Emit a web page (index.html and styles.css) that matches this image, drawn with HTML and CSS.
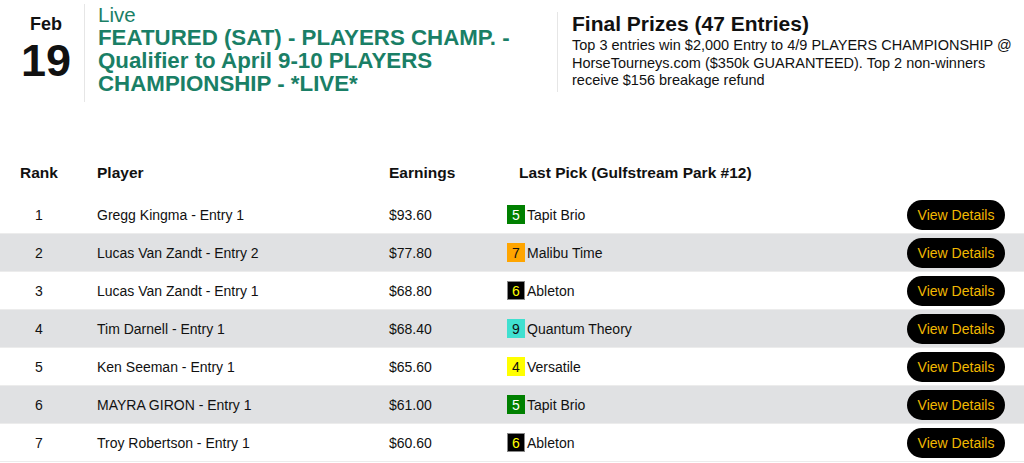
FILE: index.html
```html
<!DOCTYPE html>
<html>
<head>
<meta charset="utf-8">
<link rel="stylesheet" href="styles.css">
</head>
<body>
<header class="event">
  <div class="date">
    <div class="month">Feb</div>
    <div class="day">19</div>
  </div>
  <div class="title">
    <div class="status">Live</div>
    <div class="name">FEATURED (SAT) - PLAYERS CHAMP. - Qualifier to April 9-10 PLAYERS CHAMPIONSHIP - *LIVE*</div>
  </div>
  <div class="prizes">
    <div class="prizes-head">Final Prizes (47 Entries)</div>
    <div class="prizes-body">Top 3 entries win $2,000 Entry to 4/9 PLAYERS CHAMPIONSHIP @ HorseTourneys.com ($350k GUARANTEED). Top 2 non-winners receive $156 breakage refund</div>
  </div>
</header>

<div class="board">
  <div class="row head">
    <div class="c-rank">Rank</div>
    <div class="c-player">Player</div>
    <div class="c-earn">Earnings</div>
    <div class="c-pick">Last Pick (Gulfstream Park #12)</div>
    <div class="c-act"></div>
  </div>
  <div class="row">
    <div class="c-rank">1</div>
    <div class="c-player">Gregg Kingma - Entry 1</div>
    <div class="c-earn">$93.60</div>
    <div class="c-pick"><span class="pp pp5">5</span>Tapit Brio</div>
    <div class="c-act"><button class="btn">View Details</button></div>
  </div>
  <div class="row alt">
    <div class="c-rank">2</div>
    <div class="c-player">Lucas Van Zandt - Entry 2</div>
    <div class="c-earn">$77.80</div>
    <div class="c-pick"><span class="pp pp7">7</span>Malibu Time</div>
    <div class="c-act"><button class="btn">View Details</button></div>
  </div>
  <div class="row">
    <div class="c-rank">3</div>
    <div class="c-player">Lucas Van Zandt - Entry 1</div>
    <div class="c-earn">$68.80</div>
    <div class="c-pick"><span class="pp pp6">6</span>Ableton</div>
    <div class="c-act"><button class="btn">View Details</button></div>
  </div>
  <div class="row alt">
    <div class="c-rank">4</div>
    <div class="c-player">Tim Darnell - Entry 1</div>
    <div class="c-earn">$68.40</div>
    <div class="c-pick"><span class="pp pp9">9</span>Quantum Theory</div>
    <div class="c-act"><button class="btn">View Details</button></div>
  </div>
  <div class="row">
    <div class="c-rank">5</div>
    <div class="c-player">Ken Seeman - Entry 1</div>
    <div class="c-earn">$65.60</div>
    <div class="c-pick"><span class="pp pp4">4</span>Versatile</div>
    <div class="c-act"><button class="btn">View Details</button></div>
  </div>
  <div class="row alt">
    <div class="c-rank">6</div>
    <div class="c-player">MAYRA GIRON - Entry 1</div>
    <div class="c-earn">$61.00</div>
    <div class="c-pick"><span class="pp pp5">5</span>Tapit Brio</div>
    <div class="c-act"><button class="btn">View Details</button></div>
  </div>
  <div class="row">
    <div class="c-rank">7</div>
    <div class="c-player">Troy Robertson - Entry 1</div>
    <div class="c-earn">$60.60</div>
    <div class="c-pick"><span class="pp pp6">6</span>Ableton</div>
    <div class="c-act"><button class="btn">View Details</button></div>
  </div>
</div>
</body>
</html>
```

FILE: styles.css
```css
* { box-sizing: border-box; }
body {
  margin: 0;
  font-family: "Liberation Sans", Arial, sans-serif;
  color: #111;
  background: #fff;
}
.event {
  display: flex;
  align-items: flex-start;
  padding-top: 4px;
  height: 150px;
}
.date {
  width: 85px;
  padding-left: 8px;
  height: 98px;
  border-right: 1px solid #e6e6e6;
  display: flex;
  flex-direction: column;
  align-items: center;
}
.month {
  font-weight: bold;
  font-size: 18px;
  margin-top: 10px;
  line-height: 20px;
}
.day {
  font-weight: bold;
  font-size: 45px;
  line-height: 46px;
  margin-top: 4px;
}
.title {
  width: 472px;
  padding-left: 13px;
  padding-right: 20px;
  color: #1a7f66;
}
.status {
  font-size: 20.5px;
  line-height: 22px;
}
.name {
  font-weight: bold;
  font-size: 22.3px;
  line-height: 23px;
}
.prizes {
  flex: 1;
  border-left: 1px solid #e6e6e6;
  padding-left: 14px;
  margin-top: 8px;
  height: 80px;
}
.prizes-head {
  font-weight: bold;
  font-size: 21px;
  line-height: 24px;
}
.prizes-body {
  font-size: 14.5px;
  line-height: 17.5px;
  margin-top: 1px;
}
.board {
  display: flex;
  flex-direction: column;
}
.row {
  display: grid;
  grid-template-columns: 78px 292px 118px 1fr 136px;
  align-items: center;
  height: 38px;
  font-size: 14px;
  border-bottom: 1px solid #ececec;
}
.row.alt { background: #e0e1e3; }
.row.head {
  height: 46px;
  font-size: 15.5px;
  font-weight: bold;
  border-bottom: none;
}
.c-rank { text-align: center; }
.c-player, .c-earn, .c-pick { padding-left: 19px; }
.head .c-pick { padding-left: 31px; }
.c-pick { display: flex; align-items: center; }
.c-act { display: flex; justify-content: flex-end; padding-right: 19px; }
.pp {
  display: inline-flex;
  align-items: center;
  justify-content: center;
  width: 18px;
  height: 19px;
  margin-right: 2px;
  font-size: 14px;
}
.pp5 { background: #008000; color: #fff; }
.pp7 { background: #ffa500; color: #111; }
.pp6 { background: #000; color: #ffff00; border: 1px solid #888; }
.pp9 { background: #40e0d0; color: #111; }
.pp4 { background: #ffff00; color: #111; }
.btn {
  font-family: "Liberation Sans", Arial, sans-serif;
  font-size: 14px;
  color: #f2b800;
  background: #000;
  border: none;
  border-radius: 15px;
  height: 30px;
  padding: 0 10px;
  width: 98px;
}
```
